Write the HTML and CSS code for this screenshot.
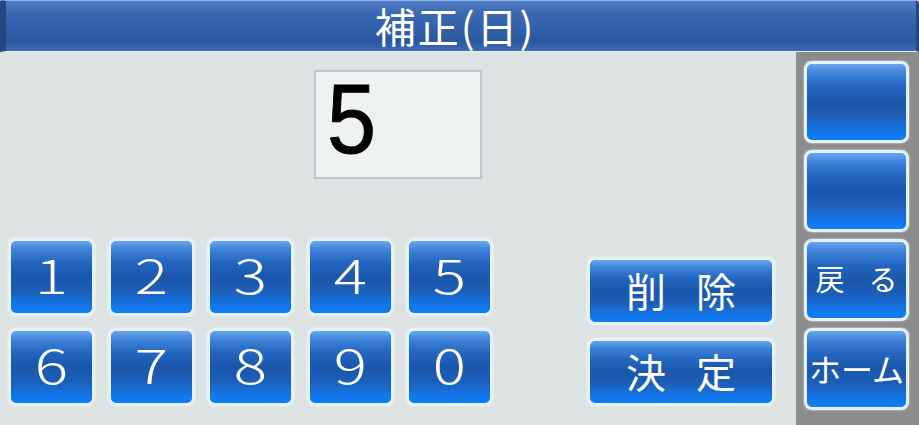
FILE: index.html
```html
<!DOCTYPE html>
<html lang="ja">
<head>
<meta charset="utf-8">
<title>補正(日)</title>
<link rel="stylesheet" href="styles.css">
</head>
<body>
<div class="screen">
  <header class="titlebar"><h1 class="title">補正(日)</h1></header>
  <div class="body">
    <main class="main">
      <div class="display-row">
        <div class="display"><span class="display-value">5</span></div>
      </div>
      <div class="controls">
        <div class="keypad">
          <button class="btn key"><span class="digit">1</span></button>
          <button class="btn key"><span class="digit">2</span></button>
          <button class="btn key"><span class="digit">3</span></button>
          <button class="btn key"><span class="digit">4</span></button>
          <button class="btn key"><span class="digit">5</span></button>
          <button class="btn key"><span class="digit">6</span></button>
          <button class="btn key"><span class="digit">7</span></button>
          <button class="btn key"><span class="digit">8</span></button>
          <button class="btn key"><span class="digit">9</span></button>
          <button class="btn key"><span class="digit">0</span></button>
        </div>
        <div class="actions">
          <button class="btn action"><span>削</span><span>除</span></button>
          <button class="btn action"><span>決</span><span>定</span></button>
        </div>
      </div>
    </main>
    <aside class="side">
      <button class="btn side-btn"></button>
      <button class="btn side-btn"></button>
      <button class="btn side-btn back"><span>戻</span><span>る</span></button>
      <button class="btn side-btn home">ホーム</button>
    </aside>
  </div>
</div>
</body>
</html>
```
FILE: styles.css
```css
html, body {
  margin: 0;
  padding: 0;
}
body {
  width: 919px;
  height: 425px;
  overflow: hidden;
  background: #dde3e3;
  font-family: "Noto Sans CJK JP", "Noto Sans", sans-serif;
}
.screen {
  width: 919px;
  height: 425px;
  display: flex;
  flex-direction: column;
}
.titlebar {
  height: 52px;
  box-sizing: border-box;
  border-top: 1px solid #8cb2ea;
  border-bottom: 1px solid #e6eef6;
  border-left: 6px solid #24477f;
  border-right: 3px solid #24477f;
  border-radius: 2px 4px 0 0;
  background: linear-gradient(to bottom, #4f7dc4 0%, #3b68b1 25%, #3261ab 55%, #2a579f 80%, #3c6cb8 100%);
  display: flex;
  align-items: flex-start;
  justify-content: center;
}
.title {
  margin: 1px 0 0 -12px;
  font-size: 41px;
  font-weight: 400;
  line-height: 46px;
  color: #ffffff;
  letter-spacing: 2px;
}
.body {
  flex: 1;
  display: flex;
}
.main {
  width: 796px;
  display: flex;
  flex-direction: column;
}
.display-row {
  padding: 18px 0 0 314px;
  height: 168px;
}
.display {
  width: 168px;
  height: 109px;
  box-sizing: border-box;
  border: 2px solid #bcc6cc;
  background: #eef2f3;
  padding: 0 0 12px 11px;
  display: flex;
  align-items: center;
}
.display-value {
  font-family: "Liberation Sans", Arial, sans-serif;
  font-size: 98px;
  line-height: 1;
  color: #000;
  -webkit-text-stroke: 1px #000;
  display: inline-block;
  transform: scaleX(0.9);
  transform-origin: left center;
}
.controls {
  display: flex;
  padding-left: 8px;
}
.btn {
  box-sizing: border-box;
  border: 3px solid #e4f3fb;
  border-radius: 8px;
  box-shadow: 0 0 2px rgba(255, 255, 255, 0.9);
  background: linear-gradient(to bottom, #6aa6ee 0%, #3f82d8 12%, #2366c0 30%, #1a56ab 50%, #1c5fba 70%, #1475e6 88%, #0f7ef6 100%);
  color: #ffffff;
  font-family: "Noto Sans CJK JP", "Noto Sans", sans-serif;
  padding: 0;
  margin: 0;
  display: flex;
  align-items: center;
  justify-content: center;
  line-height: 1;
  white-space: nowrap;
}
.keypad {
  display: grid;
  grid-template-columns: repeat(5, 87px);
  grid-auto-rows: 78px;
  column-gap: 12.5px;
  row-gap: 12px;
}
.key {
  font-size: 46px;
  font-weight: 300;
  padding-bottom: 6px;
}
.digit {
  display: inline-block;
  transform: scaleX(1.35);
}
.actions {
  margin: 19px 0 0 94px;
  display: flex;
  flex-direction: column;
  gap: 13px;
}
.action {
  width: 188px;
  height: 68px;
  font-size: 40px;
  font-weight: 400;
  gap: 30px;
  padding-bottom: 2px;
}
.side {
  flex: 1;
  background: #8c8c8c;
  padding: 9px 0 0 8px;
  display: flex;
  flex-direction: column;
  gap: 7px;
}
.side-btn {
  width: 105px;
  height: 82px;
}
.back {
  font-size: 29px;
  gap: 24px;
  padding-bottom: 4px;
}
.home {
  font-size: 32px;
  letter-spacing: 0;
  padding-bottom: 2px;
}
```
